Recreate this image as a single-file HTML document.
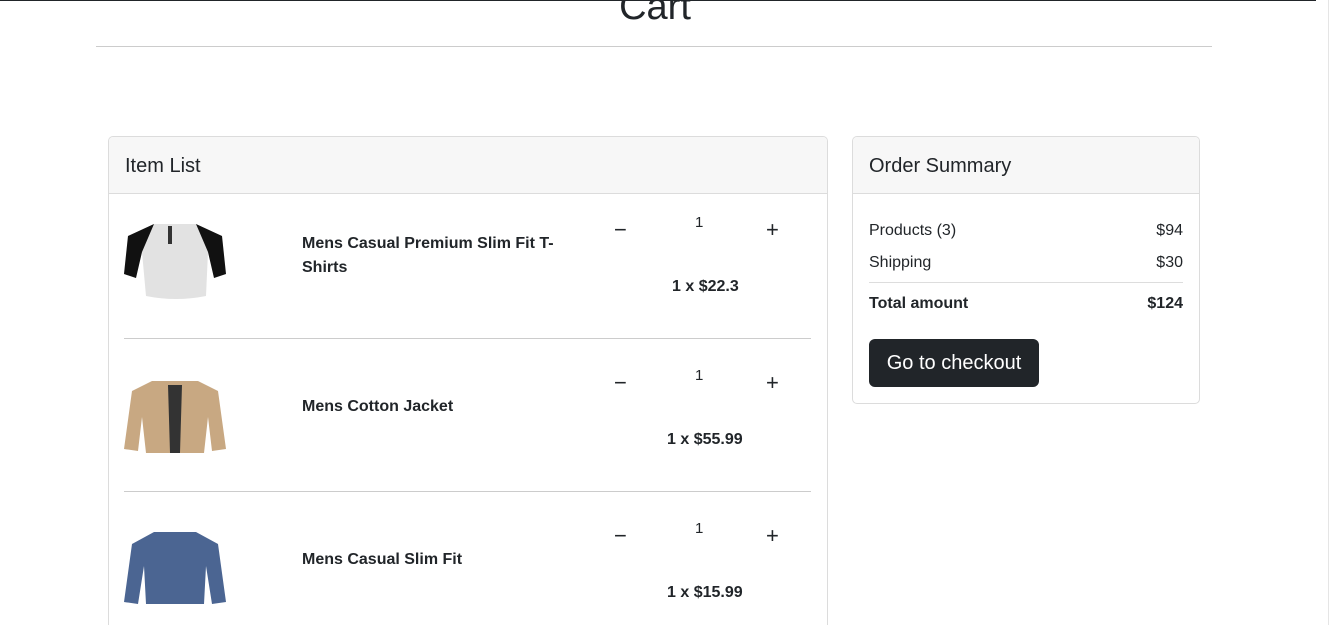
<!DOCTYPE html>
<html style="width:1330px;height:625px;overflow:hidden"><head><meta charset="utf-8"><style>
*{box-sizing:border-box;margin:0;padding:0}
html,body{width:1330px;height:625px;overflow:hidden}
body{background:#fff;font-family:"Liberation Sans",sans-serif;color:#212529;position:relative}
.a{position:absolute}
.b{font-weight:bold}
</style></head><body>
<div class="a" style="left:0;top:0;width:1316px;height:1px;background:#212529"></div>
<div class="a" style="left:1328px;top:0;width:1px;height:625px;background:#e5e5e5"></div>
<div class="a" style="left:0;width:1310px;top:-14px;text-align:center;font-size:38px;">Cart</div>
<div class="a" style="left:96px;top:46px;width:1116px;height:1px;background:#ccc"></div>

<div class="a" style="left:108px;top:136px;width:720px;height:520px;border:1px solid #dcdcdc;border-radius:5px;overflow:hidden">
 <div style="height:57px;background:#f7f7f7;border-bottom:1px solid #dcdcdc;padding:18px 16px 0;font-size:20px">Item List</div>
</div>
<div class="a" style="left:124px;top:338px;width:687px;height:1px;background:#ccc"></div>
<div class="a" style="left:124px;top:491px;width:687px;height:1px;background:#ccc"></div>

<svg class="a" style="left:124px;top:222px" width="102" height="78" viewBox="0 0 102 78"><path d="M30 2 L72 2 L98 14 L102 52 L90 56 L84 30 L82 74 Q52 80 22 74 L18 30 L12 56 L0 52 L4 14Z" fill="#e2e2e2"/><path d="M30 2 L4 14 L0 52 L12 56 L18 30Z M72 2 L98 14 L102 52 L90 56 L84 30Z" fill="#111"/><rect x="44" y="4" width="4" height="18" fill="#333"/></svg>
<div class="a b" style="left:302px;top:232px;font-size:16px;line-height:24px;width:260px">Mens Casual Premium Slim Fit T-Shirts</div>
<div class="a" style="left:614px;top:217px;font-size:22px">−</div>
<div class="a" style="left:695px;top:214px;font-size:15px">1</div>
<div class="a" style="left:766px;top:217px;font-size:22px">+</div>
<div class="a b" style="left:672px;top:278px;font-size:16px">1 x $22.3</div>

<svg class="a" style="left:124px;top:377px" width="102" height="76" viewBox="0 0 102 76"><path d="M28 4 L74 4 L94 14 L102 72 L88 74 L84 40 L80 76 L22 76 L18 40 L14 74 L0 72 L8 14Z" fill="#c8a882"/><path d="M44 8 L58 8 L56 76 L46 76Z" fill="#333"/></svg>
<div class="a b" style="left:302px;top:398px;font-size:16px">Mens Cotton Jacket</div>
<div class="a" style="left:614px;top:370px;font-size:22px">−</div>
<div class="a" style="left:695px;top:367px;font-size:15px">1</div>
<div class="a" style="left:766px;top:370px;font-size:22px">+</div>
<div class="a b" style="left:667px;top:431px;font-size:16px">1 x $55.99</div>

<svg class="a" style="left:124px;top:530px" width="102" height="76" viewBox="0 0 102 76"><path d="M30 2 L72 2 L94 14 L102 72 L88 74 L82 36 L80 74 L22 74 L20 36 L14 74 L0 72 L8 14Z" fill="#4b6592"/></svg>
<div class="a b" style="left:302px;top:551px;font-size:16px">Mens Casual Slim Fit</div>
<div class="a" style="left:614px;top:523px;font-size:22px">−</div>
<div class="a" style="left:695px;top:520px;font-size:15px">1</div>
<div class="a" style="left:766px;top:523px;font-size:22px">+</div>
<div class="a b" style="left:667px;top:584px;font-size:16px">1 x $15.99</div>

<div class="a" style="left:852px;top:136px;width:348px;height:268px;border:1px solid #dcdcdc;border-radius:5px;overflow:hidden">
 <div style="height:57px;background:#f7f7f7;border-bottom:1px solid #dcdcdc;padding:18px 16px 0;font-size:20px">Order Summary</div>
</div>
<div class="a" style="left:869px;top:222px;font-size:16px">Products (3)</div>
<div class="a" style="left:1100px;width:83px;text-align:right;top:222px;font-size:16px">$94</div>
<div class="a" style="left:869px;top:254px;font-size:16px">Shipping</div>
<div class="a" style="left:1100px;width:83px;text-align:right;top:254px;font-size:16px">$30</div>
<div class="a" style="left:869px;top:282px;width:314px;height:1px;background:#ddd"></div>
<div class="a b" style="left:869px;top:295px;font-size:16px">Total amount</div>
<div class="a b" style="left:1100px;width:83px;text-align:right;top:295px;font-size:16px">$124</div>
<div class="a" style="left:869px;top:339px;width:170px;height:48px;background:#212529;border-radius:6px;color:#fff;font-size:20px;text-align:center;line-height:48px">Go to checkout</div>
</body></html>
